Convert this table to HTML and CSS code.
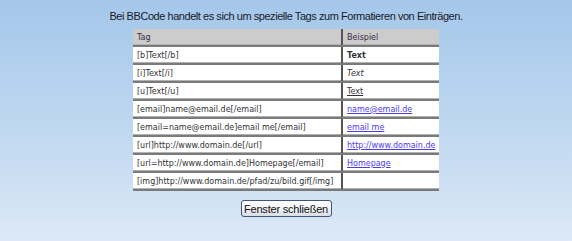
FILE: index.html
```html
<!DOCTYPE html>
<html lang="de">
<head>
    <meta charset="UTF-8">
    <title>BBCode Hilfe</title>
    <link rel="stylesheet" href="styles.css">
</head>
<body>

<div class="hilfe">
    <p class="intro">Bei BBCode handelt es sich um spezielle Tags zum Formatieren von Einträgen.</p>

    <table class="bbcode">
        <colgroup><col class="spalte-tag"><col></colgroup>
        <tr><th>Tag</th><th>Beispiel</th></tr>
        <tr><td>[b]Text[/b]</td><td><b>Text</b></td></tr>
        <tr><td>[i]Text[/i]</td><td><i>Text</i></td></tr>
        <tr><td>[u]Text[/u]</td><td><u>Text</u></td></tr>
        <tr><td>[email]name@email.de[/email]</td><td><a href="#">name@email.de</a></td></tr>
        <tr><td>[email=name@email.de]email me[/email]</td><td><a href="#">email me</a></td></tr>
        <tr><td>[url]http://www.domain.de[/url]</td><td><a href="#">http://www.domain.de</a></td></tr>
        <tr><td>[url=http://www.domain.de]Homepage[/email]</td><td><a href="#">Homepage</a></td></tr>
        <tr><td>[img]http://www.domain.de/pfad/zu/bild.gif[/img]</td><td></td></tr>
    </table>

    <button class="schliessen" onclick="window.close()">Fenster schließen</button>
</div>

</body>
</html>
```

FILE: styles.css
```css
html, body {
    height: 100%;
}
body {
    margin: 0;
    font-family: "Liberation Sans", Arial, sans-serif;
    color: #222;
    background: linear-gradient(to bottom, #a4c7ea 0%, #c3daf1 60%, #dde9f6 100%);
}
.hilfe {
    display: flex;
    flex-direction: column;
    align-items: center;
    padding-top: 10px;
}
.intro {
    margin: 0;
    height: 19px;
    font-size: 11px;
    letter-spacing: -0.45px;
    color: #1a1a2a;
}
.bbcode {
    width: 306px;
    table-layout: fixed;
    border-collapse: collapse;
    background-color: #fff;
    font-family: "DejaVu Sans", Verdana, sans-serif;
    font-size: 8px;
    color: #333;
}
.spalte-tag {
    width: 209px;
}
.bbcode th, .bbcode td {
    height: 16px;
    padding: 0 4px;
    text-align: left;
    white-space: nowrap;
    overflow: hidden;
    border-bottom: 2px solid #7a7a7a;
    box-shadow: inset 0 -1px 0 #b0b0b0;
}
.bbcode th {
    background-color: #cccccc;
    font-weight: normal;
    color: #3a2a44;
}
.bbcode th:first-child, .bbcode td:first-child {
    border-right: 2px solid #555;
}
.bbcode a {
    color: #4b3cf2;
}
.schliessen {
    margin-top: 9px;
    width: 91px;
    height: 17px;
    padding: 0;
    white-space: nowrap;
    font-family: "Liberation Sans", Arial, sans-serif;
    font-size: 11px;
    letter-spacing: -0.2px;
    color: #111;
    border: 1px solid #3f5479;
    border-radius: 3px;
    background: linear-gradient(to bottom, #ffffff 0%, #f2f3f6 50%, #d9dde6 100%);
    cursor: pointer;
}
```
